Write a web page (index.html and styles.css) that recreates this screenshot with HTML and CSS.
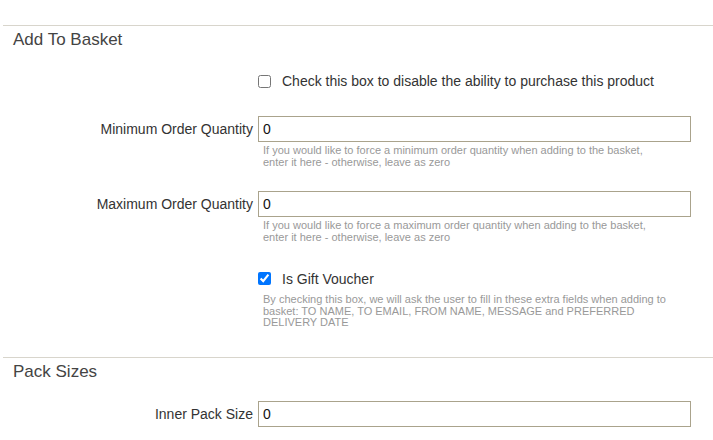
FILE: index.html
```html
<!DOCTYPE html>
<html lang="en">
<head>
  <meta charset="UTF-8">
  <title>Product - Add To Basket</title>
  <meta name="viewport" content="width=device-width, initial-scale=1.0">
  <link rel="stylesheet" href="styles.css">
</head>
<body>
  <div class="section">
    <h2 class="section-title">Add To Basket</h2>

    <div class="row">
      <div class="label"></div>
      <div class="field">
        <label class="check"><input type="checkbox"> Check this box to disable the ability to purchase this product</label>
      </div>
    </div>

    <div class="row">
      <label class="label" for="minQty">Minimum Order Quantity</label>
      <div class="field">
        <input id="minQty" class="text" type="text" value="0">
        <div class="help">If you would like to force a minimum order quantity when adding to the basket, enter it here - otherwise, leave as zero</div>
      </div>
    </div>

    <div class="row">
      <label class="label" for="maxQty">Maximum Order Quantity</label>
      <div class="field">
        <input id="maxQty" class="text" type="text" value="0">
        <div class="help">If you would like to force a maximum order quantity when adding to the basket, enter it here - otherwise, leave as zero</div>
      </div>
    </div>

    <div class="row">
      <div class="label"></div>
      <div class="field">
        <label class="check"><input type="checkbox" checked> Is Gift Voucher</label>
        <div class="help">By checking this box, we will ask the user to fill in these extra fields when adding to basket: TO NAME, TO EMAIL, FROM NAME, MESSAGE and PREFERRED DELIVERY DATE</div>
      </div>
    </div>
  </div>

  <div class="section">
    <h2 class="section-title">Pack Sizes</h2>

    <div class="row">
      <label class="label" for="innerPack">Inner Pack Size</label>
      <div class="field">
        <input id="innerPack" class="text" type="text" value="0">
      </div>
    </div>
  </div>
</body>
</html>
```

FILE: styles.css
```css
body {
  margin: 0;
  padding: 25px 0 0 3px;
  font-family: "Liberation Sans", Arial, sans-serif;
  font-size: 14px;
  color: #333;
  background: #fff;
  overflow: hidden;
}
.section {
  padding-bottom: 5px;
}
.section-title {
  margin: 0 0 15px;
  padding: 0 10px;
  height: 28px;
  line-height: 28px;
  font-size: 17px;
  font-weight: normal;
  color: #444;
  border-top: 1px solid #d8d5cc;
}
.row {
  display: flex;
  margin-bottom: 23px;
}
.label {
  width: 250px;
  margin-right: 5px;
  text-align: right;
  line-height: 26px;
  flex-shrink: 0;
}
.field {
  flex: 1;
}
.check {
  display: flex;
  align-items: center;
  gap: 11px;
  height: 24px;
  color: #333;
}
.check input {
  margin: 0;
  width: 13px;
  height: 13px;
}
.text {
  display: block;
  box-sizing: border-box;
  width: 433px;
  height: 26px;
  margin: 0;
  padding: 0 4px;
  border: 1px solid #aaa38c;
  border-radius: 0;
  font-family: inherit;
  font-size: 14px;
  color: #111;
  outline: none;
}
.help {
  width: 405px;
  margin-top: 3px;
  padding-left: 5px;
  font-size: 11px;
  line-height: 11.7px;
  color: #999;
}
```
